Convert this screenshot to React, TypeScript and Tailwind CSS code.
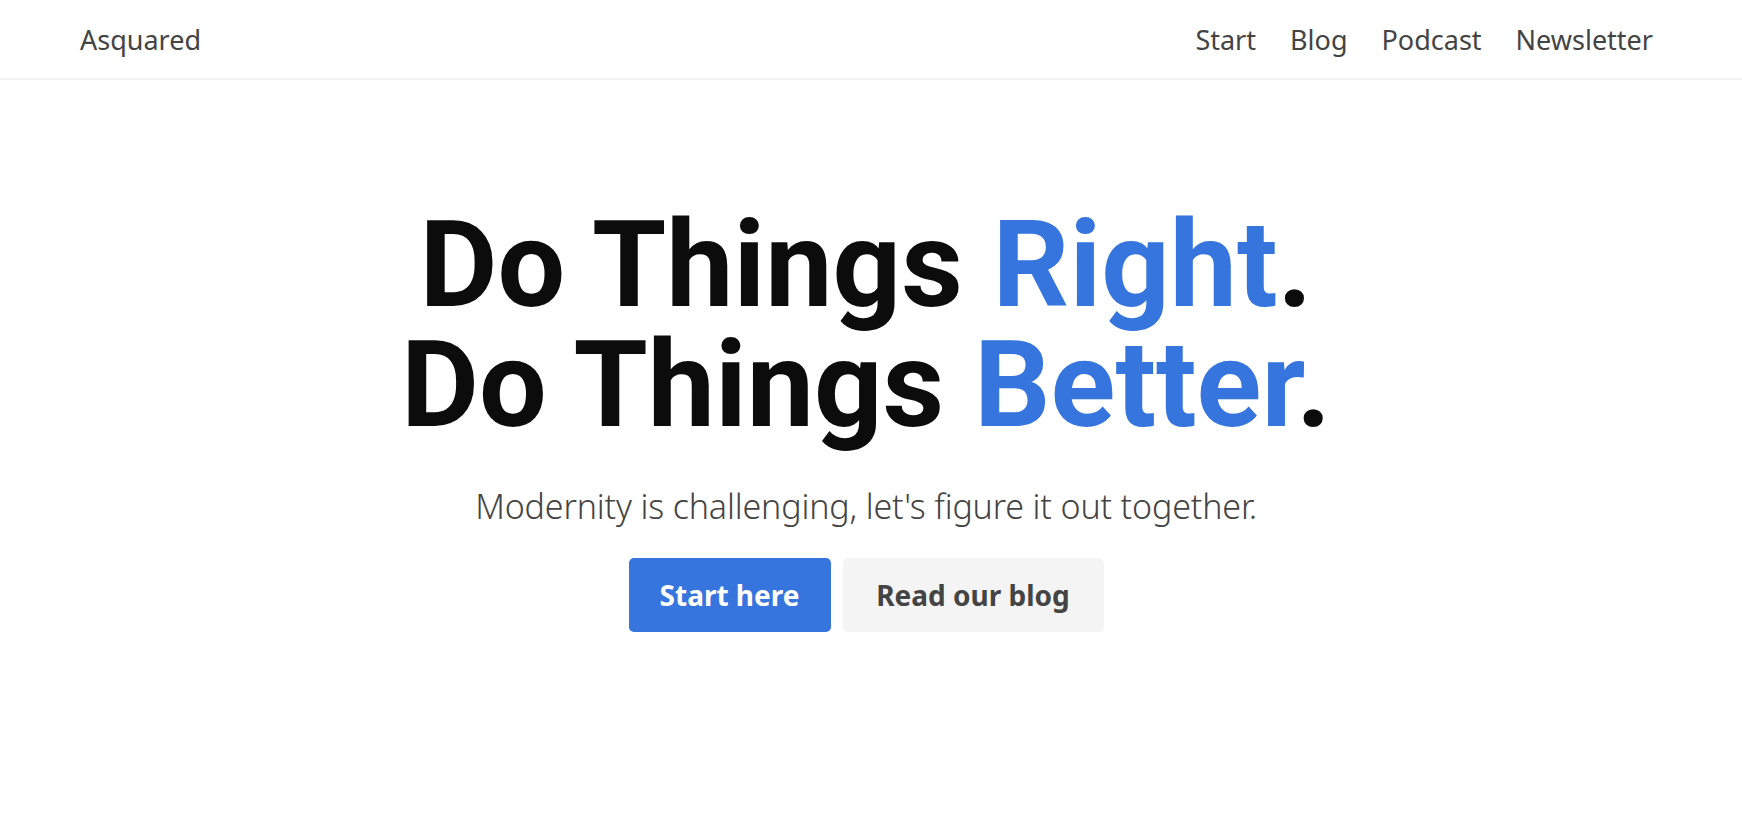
const navLinks = ["Start", "Blog", "Podcast", "Newsletter"];

function Header() {
  return (
    <header className="flex h-[80px] items-center justify-between border-b-2 border-[#f3f3f3] pl-[80px] pr-[89px] pt-[3px] font-['Noto_Sans',sans-serif] text-[#444444]">
      <a href="#" className="text-[27px] font-normal">
        Asquared
      </a>
      <nav className="flex items-center gap-[34px] text-[27px]">
        {navLinks.map((link) => (
          <a key={link} href="#">
            {link}
          </a>
        ))}
      </nav>
    </header>
  );
}

export default function App() {
  return (
    <div className="min-h-screen bg-white">
      <Header />
      <main className="flex flex-col items-center pr-[10px] pt-[125px]">
        <h1 className="text-center font-['Roboto',sans-serif] text-[120px] font-bold leading-[120px] text-[#0c0c0c]">
          Do Things <span className="text-[#3575dd]">Right</span>.
          <br />
          Do Things <span className="text-[#3575dd]">Better</span>.
        </h1>
        <p className="mt-[38px] font-['Noto_Sans',sans-serif] text-[34px] font-light leading-[46px] tracking-[-0.15px] text-[#444444]">
          Modernity is challenging, let's figure it out together.
        </p>
        <div className="mt-[29px] flex gap-[12px] font-['Noto_Sans',sans-serif] text-[28px] font-bold">
          <a
            href="#"
            className="flex h-[74px] w-[202px] items-center justify-center rounded-[5px] bg-[#3575dd] text-white"
          >
            Start here
          </a>
          <a
            href="#"
            className="flex h-[74px] w-[261px] items-center justify-center rounded-[5px] bg-[#f4f4f4] text-[#444444]"
          >
            Read our blog
          </a>
        </div>
      </main>
    </div>
  );
}
